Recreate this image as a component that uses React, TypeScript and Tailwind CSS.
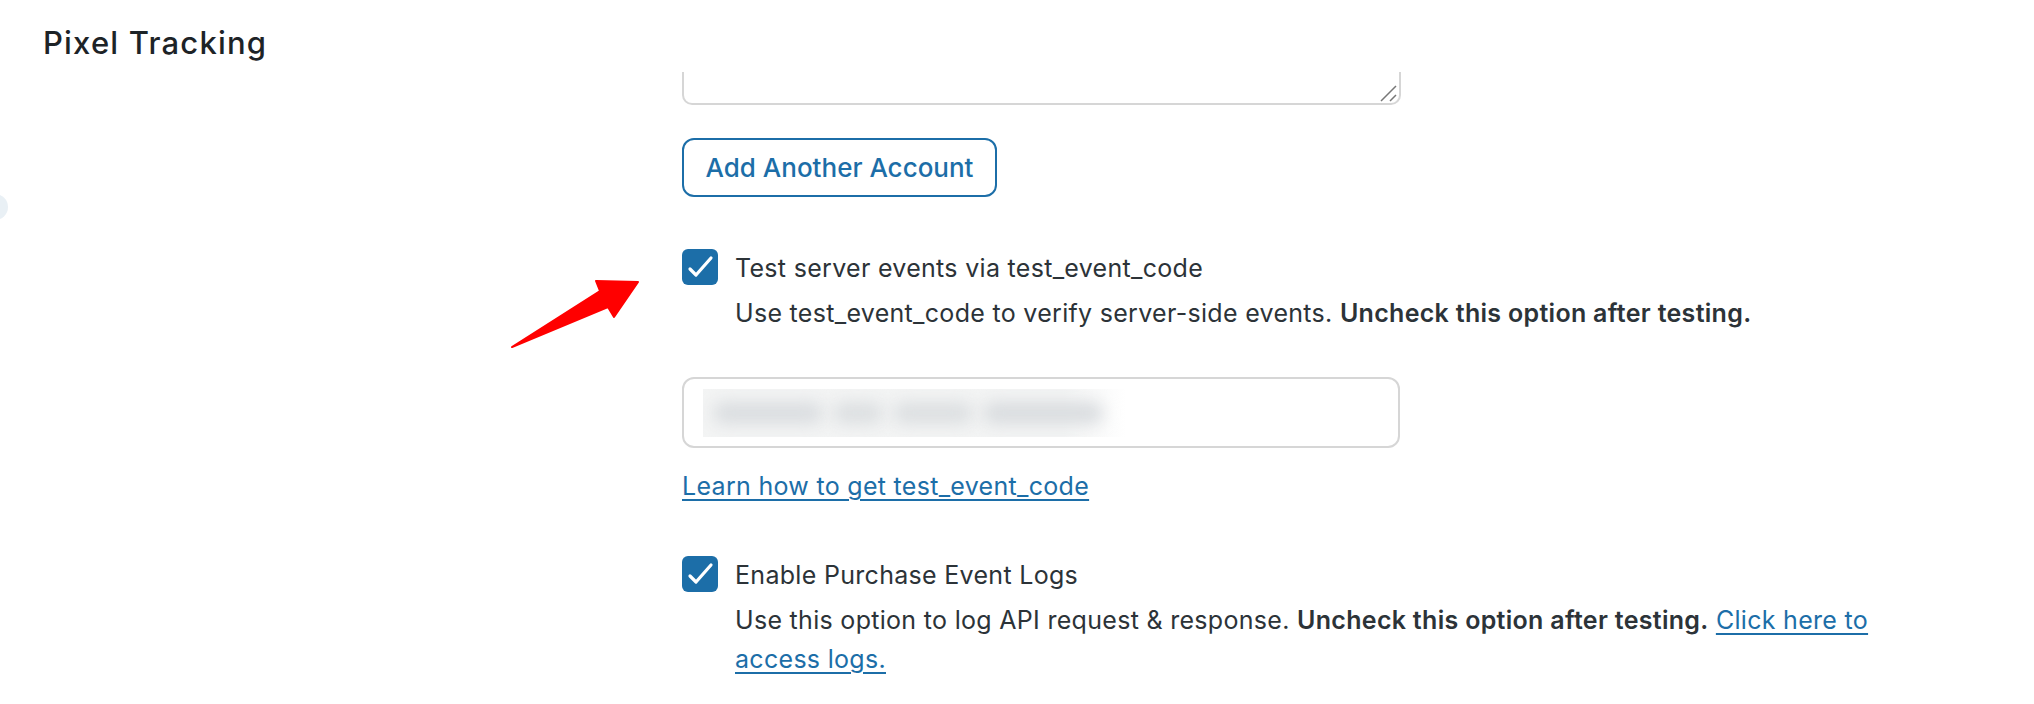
const font = { fontFamily: "Inter, 'Noto Sans', sans-serif" }

function Checkbox() {
  return (
    <span className="flex h-[36px] w-[36px] shrink-0 items-center justify-center rounded-[6px] bg-[#1c6ea8]">
      <svg width="36" height="36" viewBox="0 0 36 36" fill="none">
        <path d="M8 20 L14 26 L29 9" stroke="white" strokeWidth="3.2" strokeLinecap="round" strokeLinejoin="round" />
      </svg>
    </span>
  )
}

function Option({ label, children }: { label: string; children: React.ReactNode }) {
  return (
    <div className="flex flex-col">
      <div className="flex items-center gap-[17px]">
        <Checkbox />
        <span className="pt-[3px] text-[25px] leading-[36px] tracking-[0.3px] text-[#2c3338]">{label}</span>
      </div>
      <p className="mt-[8px] ml-[53px] max-w-[1180px] text-[25px] leading-[39px] tracking-[0.3px] text-[#2c3338]">
        {children}
      </p>
    </div>
  )
}

export default function App() {
  return (
    <div className="relative h-[704px] w-full overflow-hidden bg-white" style={font}>
      <span className="absolute left-[-18px] top-[194px] h-[26px] w-[26px] rounded-full bg-[#e9f0f5]" />

      <div className="flex">
        <div className="w-[682px] shrink-0 pl-[43px] pt-[25px]">
          <h2 className="text-[31px] font-medium leading-[36px] tracking-[1.2px] text-[#1d2327]">Pixel Tracking</h2>
        </div>

        <div className="flex flex-col items-start pt-[72px]">
          <div className="relative h-[33px] w-[719px] rounded-b-[10px] border-x-2 border-b-2 border-[#d6d6d6]">
            <svg className="absolute bottom-[1px] right-[1px]" width="18" height="18" viewBox="0 0 18 18">
              <path d="M1 17 L16 2 M10 17 L16 11" stroke="#777" strokeWidth="1.5" />
            </svg>
          </div>

          <button className="mt-[33px] h-[59px] w-[315px] rounded-[12px] border-2 border-[#1c6ea8] text-[26px] font-medium text-[#1c6ea8]">
            Add Another Account
          </button>

          <div className="mt-[50px]">
            <Option label="Test server events via test_event_code">
              Use test_event_code to verify server-side events.{" "}
              <span className="font-semibold">Uncheck this option after testing.</span>
            </Option>
          </div>

          <div className="mt-[44px] flex h-[71px] w-[718px] items-center rounded-[12px] border-2 border-[#d6d6d6] pl-[19px]">
            <div className="flex h-[48px] w-[423px] items-center gap-[10px] overflow-hidden bg-gradient-to-r from-[#f3f4f4] from-85% to-white pl-[10px]">
              <span className="h-[22px] w-[110px] rounded-full bg-[#dadde0] blur-[8px]" />
              <span className="h-[22px] w-[50px] rounded-full bg-[#dcdfe1] blur-[8px]" />
              <span className="h-[22px] w-[80px] rounded-full bg-[#dcdfe1] blur-[8px]" />
              <span className="h-[22px] w-[120px] rounded-full bg-[#d9dcdf] blur-[8px]" />
            </div>
          </div>

          <div className="mt-[18px] text-[25px] leading-[40px] tracking-[0.3px]">
            <a href="#" className="text-[#1c6ea8] underline decoration-2 underline-offset-[4px]">
              Learn how to get test_event_code
            </a>
          </div>

          <div className="mt-[48px]">
            <Option label="Enable Purchase Event Logs">
              Use this option to log API request &amp; response.{" "}
              <span className="font-semibold">Uncheck this option after testing.</span>{" "}
              <a href="#" className="text-[#1c6ea8] underline decoration-2 underline-offset-[4px]">
                Click here to access logs.
              </a>
            </Option>
          </div>
        </div>
      </div>

      <svg className="pointer-events-none absolute left-[505px] top-[275px]" width="140" height="80" viewBox="0 0 140 80">
        <polygon
          points="7,72 95,16 91,6 133,7 109,42 103,32"
          fill="#ff0000"
          stroke="#ff0000"
          strokeWidth="2"
          strokeLinejoin="round"
        />
      </svg>
    </div>
  )
}
